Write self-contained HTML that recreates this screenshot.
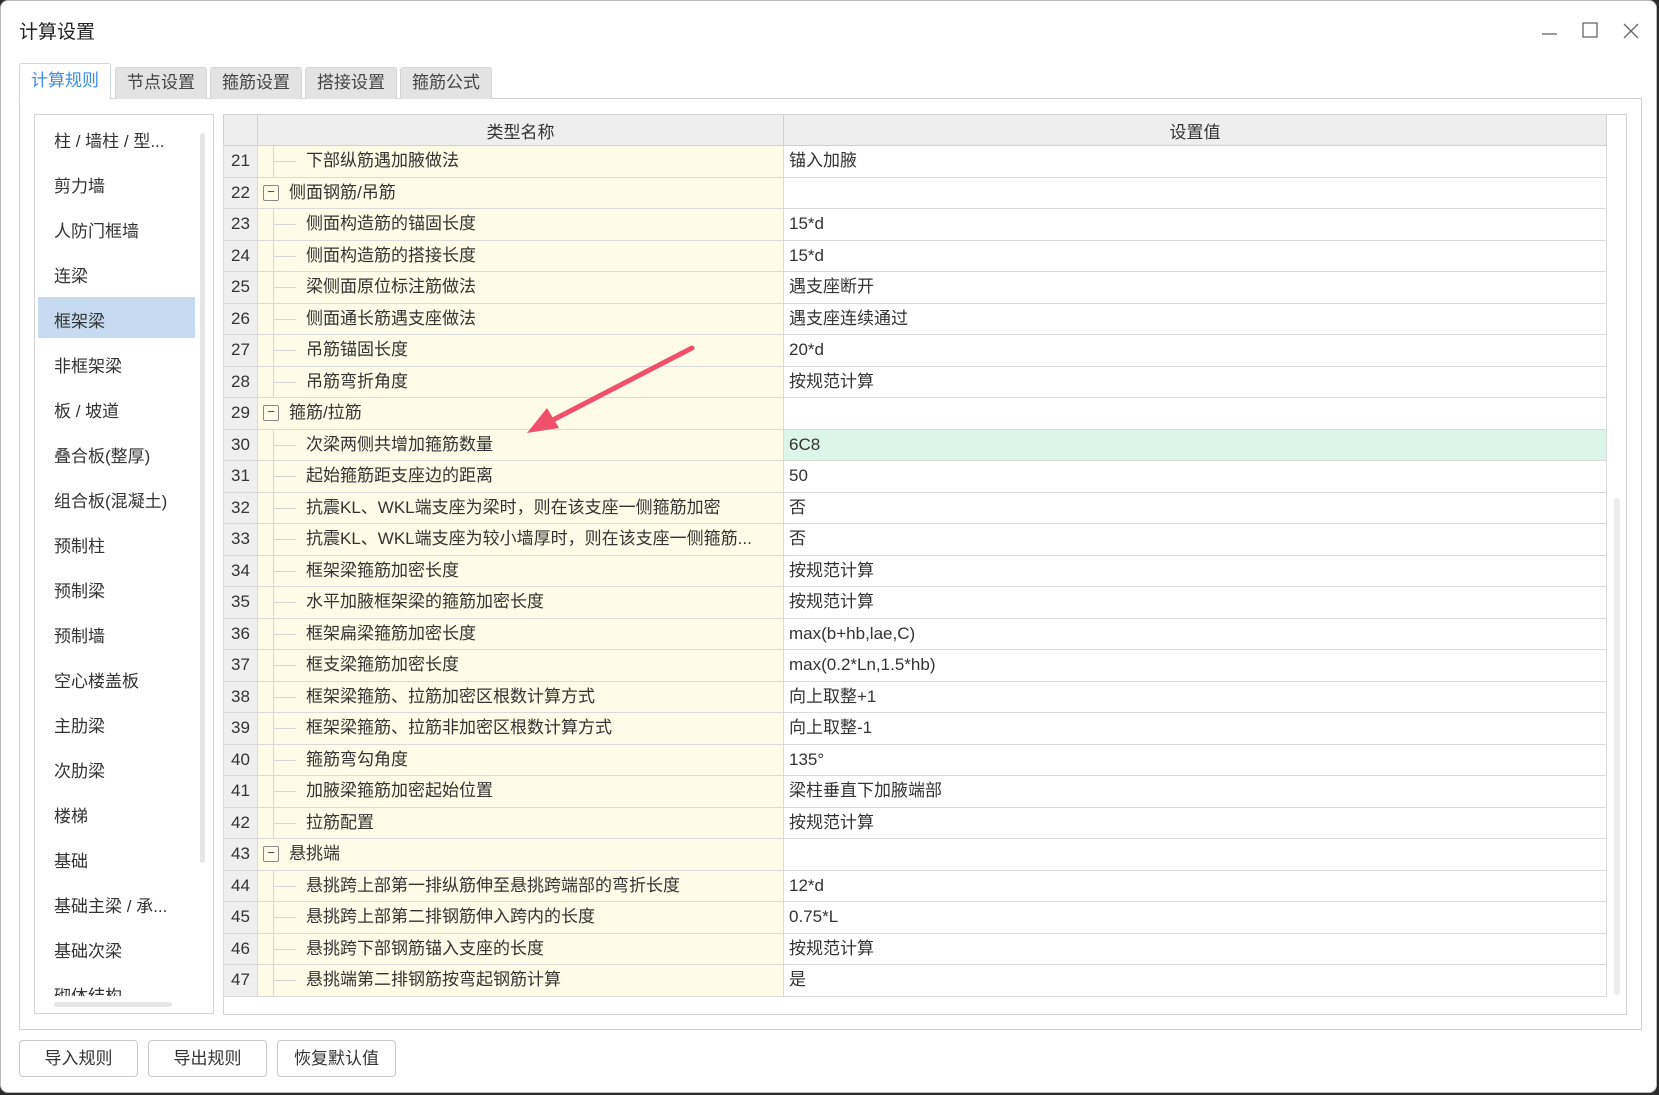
<!DOCTYPE html>
<html><head><meta charset="utf-8"><style>
*{box-sizing:border-box;margin:0;padding:0}
body{width:1659px;height:1095px;background:#2b2b2b;font-family:"Liberation Sans","Noto Sans CJK SC",sans-serif;color:#333;position:relative;overflow:hidden}
.win{position:absolute;left:0;top:0;width:1657px;height:1093px;background:#fff;border:1px solid #bbb;border-radius:8px}
.a{position:absolute}
.title{left:18px;top:16px;font-size:19px;color:#222}
.tab{position:absolute;top:66px;height:32px;background:#e3e3e3;border:1px solid #d6d6d6;border-bottom:none;font-size:17px;color:#444;text-align:center;line-height:30px;border-radius:3px 3px 0 0}
.tab.on{background:#fff;color:#3a8ee6;top:62px;height:36px;line-height:34px;border-color:#cfd6de}
.panel{left:18px;top:97px;width:1623px;height:932px;border:1px solid #cfd3d8}
.list{left:33px;top:113px;width:180px;height:900px;border:1px solid #d4d4d4;overflow:hidden}
.li{position:absolute;left:19px;font-size:17px;color:#333}
.sel{left:37px;top:296px;width:157px;height:41px;background:#c6dbf1}
.tbl{left:222px;top:113px;width:1404px;height:901px;border:1px solid #d4d4d4}
table{position:absolute;left:222px;top:113px;border-collapse:collapse;table-layout:fixed;font-size:17px}
td{height:31.5px;border:1px solid #dadada;white-space:nowrap;overflow:hidden;padding:0;vertical-align:middle;line-height:20px}
td.n{background:#efefef;text-align:center;width:34px;color:#333}
td.k{background:#fefbe6;width:526px;position:relative}
td.v{width:823px;padding-left:5px}
th{height:31px;background:#eeeeee;border:1px solid #d0d0d0;font-weight:normal;font-size:17px;color:#333}
.ln{position:absolute;left:15px;top:0;bottom:0;border-left:1px solid #d6d6d6}
.hl{position:absolute;left:15px;top:15px;width:23px;border-top:1px solid #d6d6d6}
.tx{position:absolute;left:48px;top:0;line-height:30px}
.bx{position:absolute;left:5px;top:7px;width:16px;height:16px;border:1px solid #888;border-radius:2px;font-size:13px;line-height:12px;text-align:center;color:#444}
.gt{position:absolute;left:31px;top:0;line-height:30px}
.btn{position:absolute;top:1039px;height:37px;width:119px;border:1px solid #c9c9c9;border-radius:4px;background:#fff;font-size:17px;text-align:center;line-height:35px;color:#333}
</style></head><body>
<div class="win">
<div class="a title">计算设置</div>
<svg class="a" style="left:1538px;top:20px" width="105" height="22"><line x1="3" y1="13" x2="18" y2="13" stroke="#666" stroke-width="1.3"/><rect x="44" y="2" width="14" height="14" fill="none" stroke="#666" stroke-width="1.3"/><path d="M85 3 L99 17 M99 3 L85 17" stroke="#666" stroke-width="1.3"/></svg>
<div class="a panel"></div>
<div class="tab on" style="left:18px;width:92px">计算规则</div>
<div class="tab" style="left:114px;width:92px">节点设置</div>
<div class="tab" style="left:209px;width:92px">箍筋设置</div>
<div class="tab" style="left:304px;width:92px">搭接设置</div>
<div class="tab" style="left:399px;width:92px">箍筋公式</div>
<div class="a list"></div>
<div class="a sel"></div>
<div class="a" style="left:199px;top:132px;width:5px;height:730px;background:#e6e6e6;border-radius:3px"></div>
<div class="a" style="left:53px;top:1001px;width:118px;height:5px;background:#e6e6e6;border-radius:3px"></div>
<div class="a" style="left:34px;top:113px;width:165px;height:882px;overflow:hidden">
<div class="li" style="top:13px">柱 / 墙柱 / 型...</div>
<div class="li" style="top:58px">剪力墙</div>
<div class="li" style="top:103px">人防门框墙</div>
<div class="li" style="top:148px">连梁</div>
<div class="li" style="top:193px">框架梁</div>
<div class="li" style="top:238px">非框架梁</div>
<div class="li" style="top:283px">板 / 坡道</div>
<div class="li" style="top:328px">叠合板(整厚)</div>
<div class="li" style="top:373px">组合板(混凝土)</div>
<div class="li" style="top:418px">预制柱</div>
<div class="li" style="top:463px">预制梁</div>
<div class="li" style="top:508px">预制墙</div>
<div class="li" style="top:553px">空心楼盖板</div>
<div class="li" style="top:598px">主肋梁</div>
<div class="li" style="top:643px">次肋梁</div>
<div class="li" style="top:688px">楼梯</div>
<div class="li" style="top:733px">基础</div>
<div class="li" style="top:778px">基础主梁 / 承...</div>
<div class="li" style="top:823px">基础次梁</div>
<div class="li" style="top:868px">砌体结构</div>
</div>
<div class="a tbl"></div>
<div class="a" style="left:1613px;top:497px;width:6px;height:497px;background:#ececec;border-radius:3px"></div>
<table>
<tr><th style="width:34px"></th><th style="width:526px">类型名称</th><th style="width:823px">设置值</th></tr>
<tr><td class="n">21</td><td class="k"><i class="ln"></i><i class="hl"></i><span class="tx">下部纵筋遇加腋做法</span></td><td class="v">锚入加腋</td></tr>
<tr><td class="n">22</td><td class="k"><span class="bx">−</span><span class="gt">侧面钢筋/吊筋</span></td><td class="v"></td></tr>
<tr><td class="n">23</td><td class="k"><i class="ln"></i><i class="hl"></i><span class="tx">侧面构造筋的锚固长度</span></td><td class="v">15*d</td></tr>
<tr><td class="n">24</td><td class="k"><i class="ln"></i><i class="hl"></i><span class="tx">侧面构造筋的搭接长度</span></td><td class="v">15*d</td></tr>
<tr><td class="n">25</td><td class="k"><i class="ln"></i><i class="hl"></i><span class="tx">梁侧面原位标注筋做法</span></td><td class="v">遇支座断开</td></tr>
<tr><td class="n">26</td><td class="k"><i class="ln"></i><i class="hl"></i><span class="tx">侧面通长筋遇支座做法</span></td><td class="v">遇支座连续通过</td></tr>
<tr><td class="n">27</td><td class="k"><i class="ln"></i><i class="hl"></i><span class="tx">吊筋锚固长度</span></td><td class="v">20*d</td></tr>
<tr><td class="n">28</td><td class="k"><i class="ln"></i><i class="hl"></i><span class="tx">吊筋弯折角度</span></td><td class="v">按规范计算</td></tr>
<tr><td class="n">29</td><td class="k"><span class="bx">−</span><span class="gt">箍筋/拉筋</span></td><td class="v"></td></tr>
<tr><td class="n">30</td><td class="k"><i class="ln"></i><i class="hl"></i><span class="tx">次梁两侧共增加箍筋数量</span></td><td class="v" style="background:#dcf5ea">6C8</td></tr>
<tr><td class="n">31</td><td class="k"><i class="ln"></i><i class="hl"></i><span class="tx">起始箍筋距支座边的距离</span></td><td class="v">50</td></tr>
<tr><td class="n">32</td><td class="k"><i class="ln"></i><i class="hl"></i><span class="tx">抗震KL、WKL端支座为梁时，则在该支座一侧箍筋加密</span></td><td class="v">否</td></tr>
<tr><td class="n">33</td><td class="k"><i class="ln"></i><i class="hl"></i><span class="tx">抗震KL、WKL端支座为较小墙厚时，则在该支座一侧箍筋...</span></td><td class="v">否</td></tr>
<tr><td class="n">34</td><td class="k"><i class="ln"></i><i class="hl"></i><span class="tx">框架梁箍筋加密长度</span></td><td class="v">按规范计算</td></tr>
<tr><td class="n">35</td><td class="k"><i class="ln"></i><i class="hl"></i><span class="tx">水平加腋框架梁的箍筋加密长度</span></td><td class="v">按规范计算</td></tr>
<tr><td class="n">36</td><td class="k"><i class="ln"></i><i class="hl"></i><span class="tx">框架扁梁箍筋加密长度</span></td><td class="v">max(b+hb,lae,C)</td></tr>
<tr><td class="n">37</td><td class="k"><i class="ln"></i><i class="hl"></i><span class="tx">框支梁箍筋加密长度</span></td><td class="v">max(0.2*Ln,1.5*hb)</td></tr>
<tr><td class="n">38</td><td class="k"><i class="ln"></i><i class="hl"></i><span class="tx">框架梁箍筋、拉筋加密区根数计算方式</span></td><td class="v">向上取整+1</td></tr>
<tr><td class="n">39</td><td class="k"><i class="ln"></i><i class="hl"></i><span class="tx">框架梁箍筋、拉筋非加密区根数计算方式</span></td><td class="v">向上取整-1</td></tr>
<tr><td class="n">40</td><td class="k"><i class="ln"></i><i class="hl"></i><span class="tx">箍筋弯勾角度</span></td><td class="v">135°</td></tr>
<tr><td class="n">41</td><td class="k"><i class="ln"></i><i class="hl"></i><span class="tx">加腋梁箍筋加密起始位置</span></td><td class="v">梁柱垂直下加腋端部</td></tr>
<tr><td class="n">42</td><td class="k"><i class="ln"></i><i class="hl"></i><span class="tx">拉筋配置</span></td><td class="v">按规范计算</td></tr>
<tr><td class="n">43</td><td class="k"><span class="bx">−</span><span class="gt">悬挑端</span></td><td class="v"></td></tr>
<tr><td class="n">44</td><td class="k"><i class="ln"></i><i class="hl"></i><span class="tx">悬挑跨上部第一排纵筋伸至悬挑跨端部的弯折长度</span></td><td class="v">12*d</td></tr>
<tr><td class="n">45</td><td class="k"><i class="ln"></i><i class="hl"></i><span class="tx">悬挑跨上部第二排钢筋伸入跨内的长度</span></td><td class="v">0.75*L</td></tr>
<tr><td class="n">46</td><td class="k"><i class="ln"></i><i class="hl"></i><span class="tx">悬挑跨下部钢筋锚入支座的长度</span></td><td class="v">按规范计算</td></tr>
<tr><td class="n">47</td><td class="k"><i class="ln"></i><i class="hl"></i><span class="tx">悬挑端第二排钢筋按弯起钢筋计算</span></td><td class="v">是</td></tr>
</table>
<svg class="a" style="left:510px;top:335px" width="200" height="110"><path d="M181 12 L38 86" stroke="#f0506a" stroke-width="5" stroke-linecap="round"/><path d="M16 97 L36 72 L48 92 Z" fill="#f0506a"/></svg>
<div class="btn" style="left:18px">导入规则</div>
<div class="btn" style="left:147px">导出规则</div>
<div class="btn" style="left:276px">恢复默认值</div>
</div>
</body></html>
